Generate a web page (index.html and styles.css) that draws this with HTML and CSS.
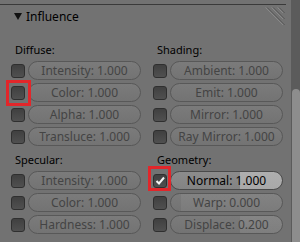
FILE: index.html
```html
<!DOCTYPE html>
<html>
<head>
    <link rel="stylesheet" href="styles.css">
</head>
<body>
<div class="screen">
    <div class="panel">
        <div class="prevEdge"></div>
        <div class="panelHeader">
            <svg class="disclosure" width="8" height="7" viewBox="0 0 8 7"><polygon points="0,0 8,0 4,7" fill="#111"/></svg>
            <span class="panelTitle">Influence</span>
            <svg class="grip" width="20" height="18" viewBox="0 0 20 18">
                <g stroke-width="1">
                    <line x1="1" y1="0.5" x2="18.5" y2="18" stroke="#a0a0a0"/>
                    <line x1="2" y1="0.5" x2="19.5" y2="18" stroke="#4c4c4c"/>
                    <line x1="7" y1="0.5" x2="18.5" y2="12" stroke="#a0a0a0"/>
                    <line x1="8" y1="0.5" x2="19.5" y2="12" stroke="#4c4c4c"/>
                    <line x1="13" y1="0.5" x2="18.5" y2="6" stroke="#a0a0a0"/>
                    <line x1="14" y1="0.5" x2="19.5" y2="6" stroke="#4c4c4c"/>
                </g>
            </svg>
        </div>

        <div class="group first">
            <div class="column">
                <div class="groupLabel">Diffuse:</div>
                <div class="rows">
                    <div class="prop"><span class="check"></span><div class="slider">Intensity: 1.000</div></div>
                    <div class="prop"><span class="check"><span class="mark markLeft"></span></span><div class="slider">Color: 1.000</div></div>
                    <div class="prop"><span class="check"></span><div class="slider">Alpha: 1.000</div></div>
                    <div class="prop"><span class="check"></span><div class="slider">Transluce: 1.000</div></div>
                </div>
            </div>
            <div class="column">
                <div class="groupLabel">Shading:</div>
                <div class="rows">
                    <div class="prop"><span class="check"></span><div class="slider">Ambient: 1.000</div></div>
                    <div class="prop"><span class="check"></span><div class="slider">Emit: 1.000</div></div>
                    <div class="prop"><span class="check"></span><div class="slider">Mirror: 1.000</div></div>
                    <div class="prop"><span class="check"></span><div class="slider">Ray Mirror: 1.000</div></div>
                </div>
            </div>
        </div>

        <div class="group second">
            <div class="column">
                <div class="groupLabel">Specular:</div>
                <div class="rows">
                    <div class="prop"><span class="check"></span><div class="slider">Intensity: 1.000</div></div>
                    <div class="prop"><span class="check"></span><div class="slider">Color: 1.000</div></div>
                    <div class="prop"><span class="check"></span><div class="slider">Hardness: 1.000</div></div>
                </div>
            </div>
            <div class="column">
                <div class="groupLabel">Geometry:</div>
                <div class="rows">
                    <div class="prop">
                        <span class="check checked">
                            <svg width="12" height="12" viewBox="0 0 12 12"><polyline points="2.5,6 5,8.5 10,2.5" fill="none" stroke="#f4f4f4" stroke-width="2"/></svg>
                            <span class="mark markRight"></span>
                        </span>
                        <div class="slider active">Normal: 1.000</div>
                    </div>
                    <div class="prop"><span class="check"></span><div class="slider warp">Warp: 0.000</div></div>
                    <div class="prop"><span class="check"></span><div class="slider displace">Displace: 0.200</div></div>
                </div>
            </div>
        </div>
    </div>
    <div class="scrollTrack"><div class="scrollThumb"></div></div>
</div>
</body>
</html>
```

FILE: styles.css
```css
body {
    margin: 0;
    background-color: #727272;
    font-family: "Noto Sans", "Open Sans", sans-serif;
    overflow: hidden;
}
.screen {
    display: flex;
    width: 300px;
    height: 242px;
}
.panel {
    width: 291px;
}
.prevEdge {
    height: 4px;
    margin-right: 5px;
    border-bottom: 1px solid #3a3a3a;
}
.panelHeader {
    display: flex;
    align-items: flex-start;
    height: 18px;
    padding-top: 2px;
    padding-left: 14px;
}
.disclosure {
    margin-top: 6px;
}
.panelTitle {
    margin-left: 4px;
    margin-top: 3px;
    font-size: 12px;
    line-height: 14px;
    color: #000;
}
.grip {
    margin-left: auto;
    margin-right: 6px;
}
.group {
    display: grid;
    grid-template-columns: 130px 130px;
    column-gap: 12px;
    padding-left: 11px;
}
.group.first {
    margin-top: 19px;
}
.group.second {
    margin-top: 8px;
}
.groupLabel {
    padding-left: 4px;
    margin-bottom: 5px;
    font-size: 11px;
    line-height: 12px;
    color: #000;
}
.rows {
    display: flex;
    flex-direction: column;
    gap: 3px;
}
.prop {
    display: flex;
    align-items: center;
    gap: 3px;
    height: 19px;
}
.check {
    position: relative;
    flex: none;
    display: flex;
    align-items: center;
    justify-content: center;
    width: 14px;
    height: 14px;
    box-sizing: border-box;
    border: 1px solid #2f2f2f;
    border-radius: 3px;
    background: linear-gradient(#404040, #505050);
}
.slider {
    flex: 1;
    height: 19px;
    box-sizing: border-box;
    padding-top: 1px;
    border: 1px solid #585858;
    border-radius: 10px;
    background: linear-gradient(#7b7b7b, #737373);
    color: #444;
    font-size: 12px;
    line-height: 16px;
    text-align: center;
    white-space: nowrap;
}
.slider.active {
    border-color: #4a4a4a;
    background:
        linear-gradient(to right, transparent 62%, rgba(255,255,255,0.3) 62%),
        linear-gradient(#8c8c8c, #838383);
    color: #000;
}
.slider.warp {
    background:
        linear-gradient(to right, transparent 9%, rgba(255,255,255,0.06) 9%),
        linear-gradient(#7b7b7b, #737373);
}
.slider.displace {
    background:
        linear-gradient(to right, transparent 62%, rgba(255,255,255,0.08) 62%),
        linear-gradient(#7b7b7b, #737373);
}
.mark {
    position: absolute;
    box-sizing: border-box;
    border: 3px solid #e2262a;
}
.markLeft {
    left: -6px;
    top: -7px;
    width: 25px;
    height: 26px;
}
.markRight {
    left: -6px;
    top: -9px;
    width: 23px;
    height: 25px;
}
.scrollTrack {
    width: 9px;
    background-color: #5b5b5b;
}
.scrollThumb {
    margin-top: 89px;
    margin-left: 1px;
    height: 160px;
    background-color: #8d8d8d;
    border-radius: 4px 4px 0 0;
}
```
